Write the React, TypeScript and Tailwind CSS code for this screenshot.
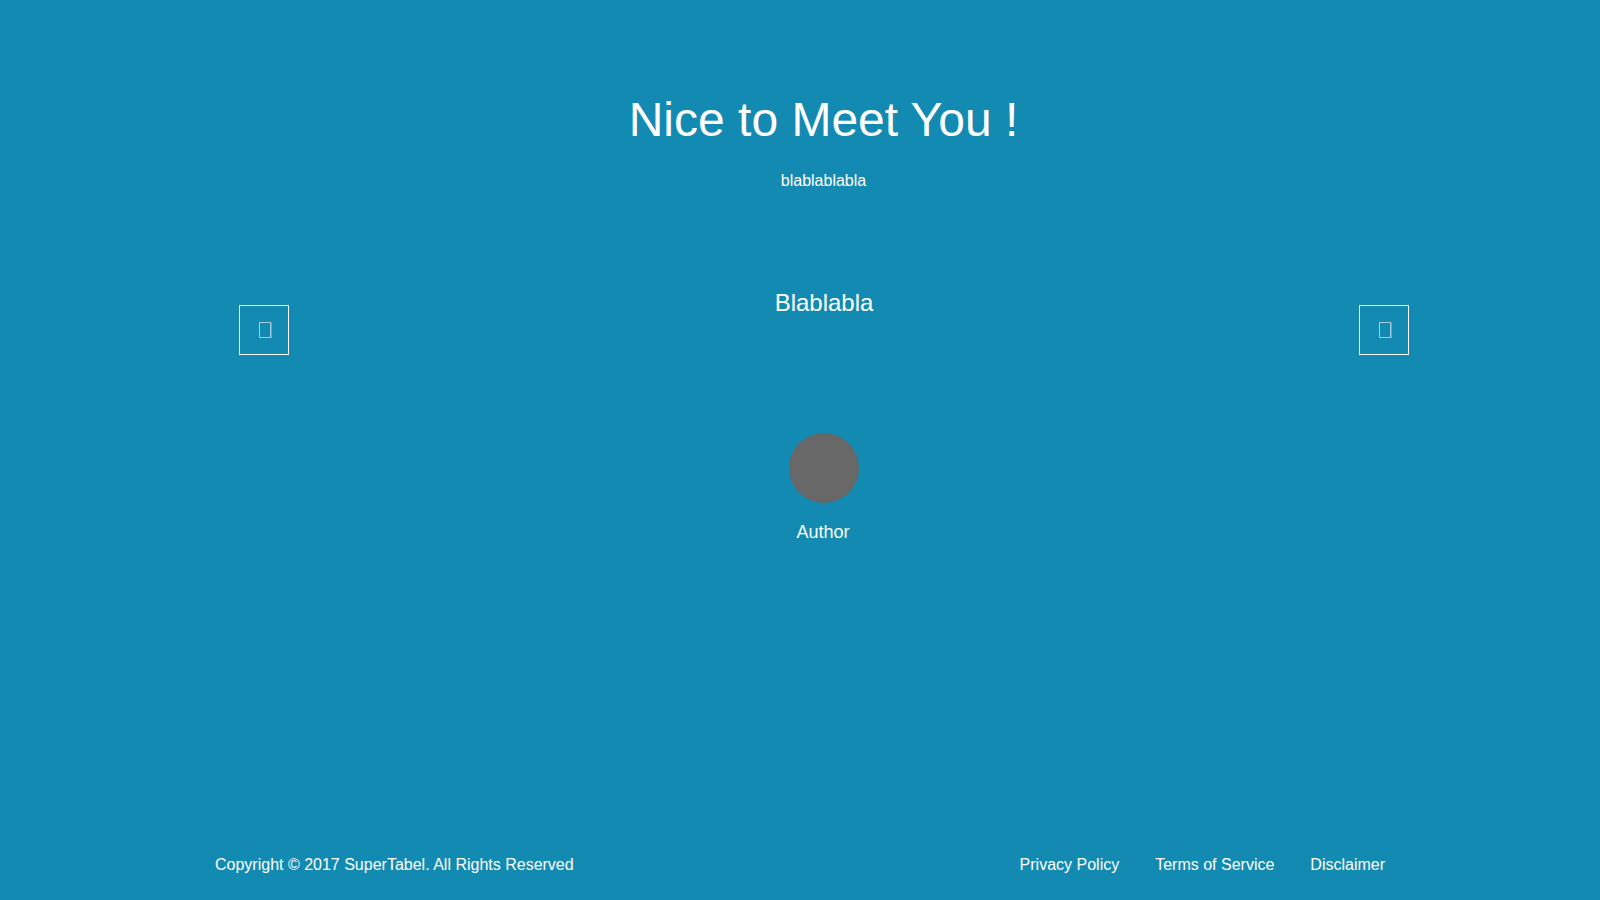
const MissingGlyph = () => {
  return (
    <svg width="13" height="17" viewBox="0 0 13 17" className="opacity-60">
      <rect x="0.5" y="0.5" width="11" height="15" fill="none" stroke="white" strokeWidth="1" />
      <line x1="12" y1="0.5" x2="12" y2="16" stroke="white" strokeWidth="1" />
    </svg>
  );
};

const ArrowButton = () => {
  return (
    <button className="mt-[18px] flex h-[50px] w-[50px] shrink-0 items-center justify-center border border-white pl-[2px] pt-[1px]">
      <MissingGlyph />
    </button>
  );
};

const App = () => {
  const links = ["Privacy Policy", "Terms of Service", "Disclaimer"];

  return (
    <div className="flex min-h-screen flex-col bg-[#128ab2] font-['Liberation_Sans',Arial,sans-serif] text-white">
      <div className="flex w-full justify-center pl-[47px]">
        <div className="flex w-[1170px] flex-col items-center">

          <h1 className="pt-[96px] text-center text-[48px] leading-[48px]">Nice to Meet You !</h1>
          <p className="mt-[25px] text-center text-[16px] leading-6">blablablabla</p>

          <div className="mt-[94px] ml-[1px] flex w-full items-start">
            <ArrowButton />
            <div className="flex flex-1 flex-col items-center">
              <div className="text-[24px] leading-8">Blablabla</div>
              <div className="mt-[114px] h-[70px] w-[70px] rounded-full bg-[#686868]" />
              <div className="mt-[17px] pr-[2px] text-[18px] leading-6">Author</div>
            </div>
            <ArrowButton />
          </div>

        </div>
      </div>

      <footer className="mx-auto mt-auto flex w-[1170px] items-center justify-between pb-[23px] text-[16px] leading-6">
        <span>Copyright © 2017 SuperTabel. All Rights Reserved</span>
        <nav className="flex gap-9">
          {links.map((link) => (
            <a key={link} href="#">
              {link}
            </a>
          ))}
        </nav>
      </footer>
    </div>
  );
};

export default App;
